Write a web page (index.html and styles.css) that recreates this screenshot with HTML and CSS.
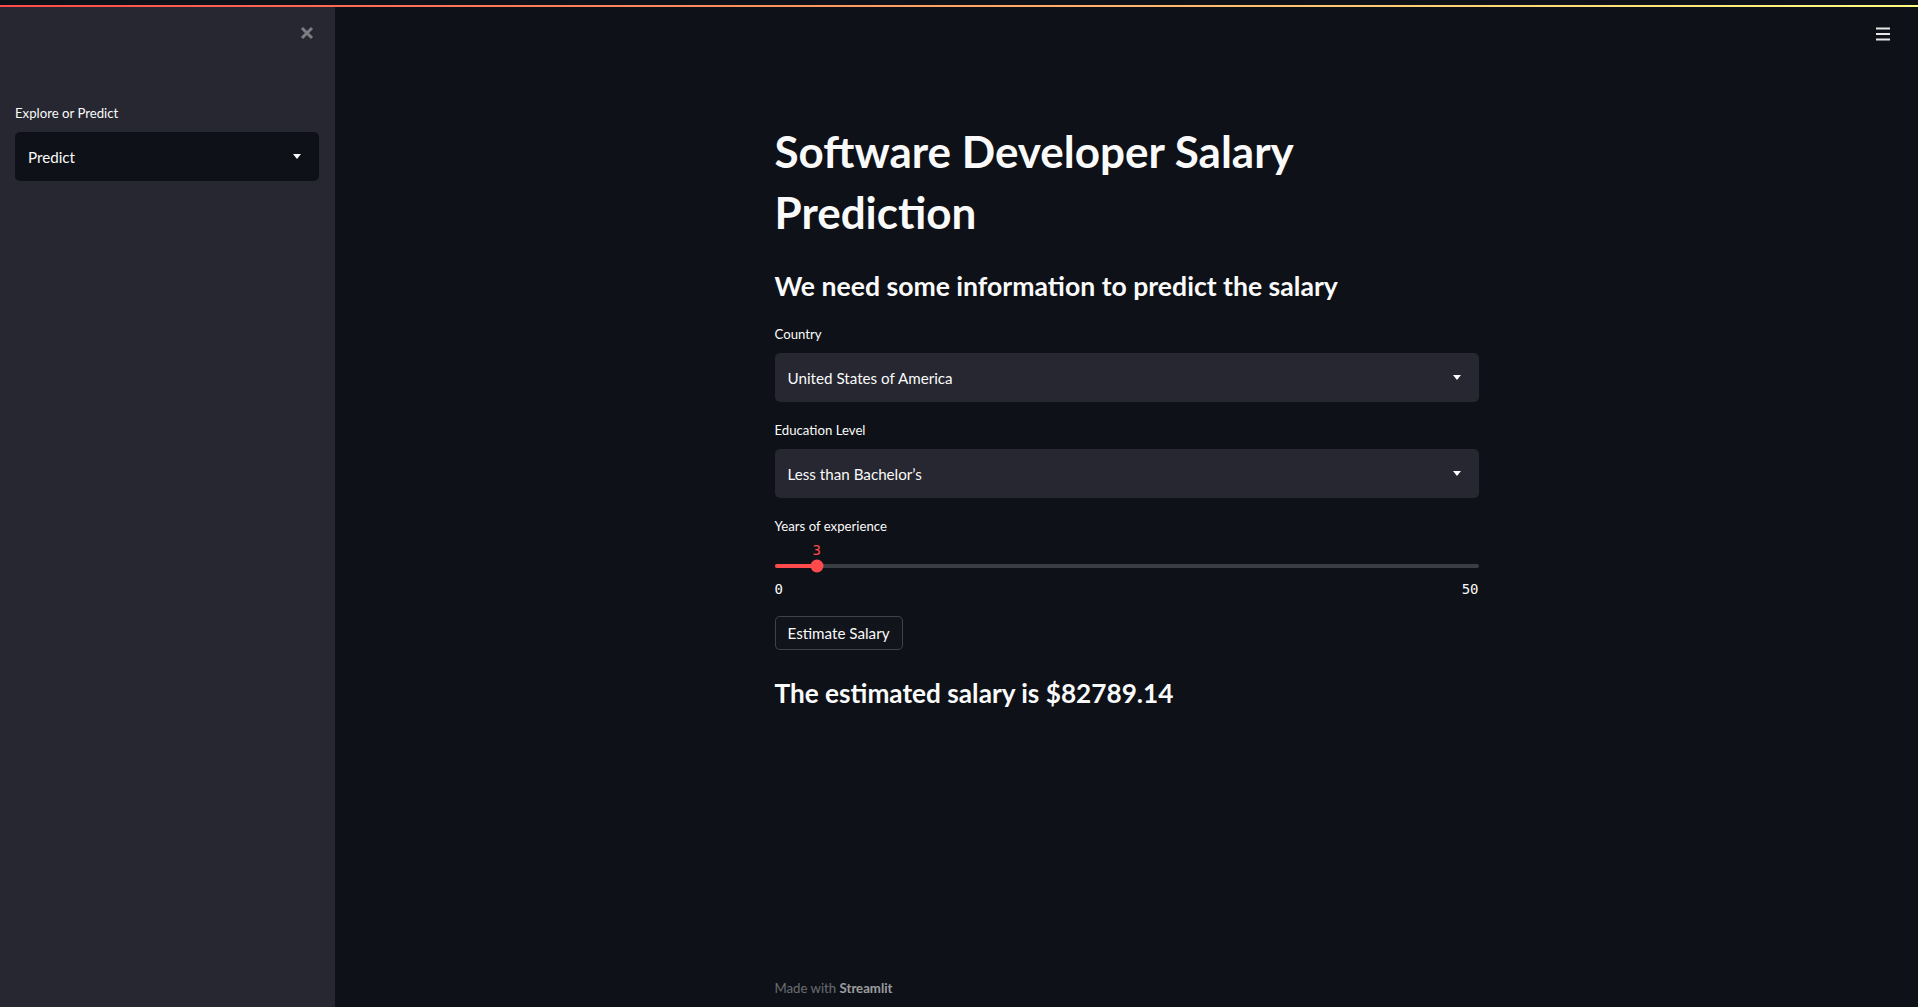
FILE: index.html
```html
<!DOCTYPE html>
<html lang="en">
<head>
<meta charset="utf-8">
<title>Salary Prediction</title>
<link rel="stylesheet" href="styles.css">
</head>
<body>
<div class="topgap"></div>
<div class="decoration"></div>
<div class="app">
  <aside class="sidebar">
    <div class="sidebar-head">
      <button class="close-btn" aria-label="Close sidebar">
        <svg viewBox="0 0 14 14" width="14" height="14"><path d="M2 2 L12 12 M12 2 L2 12" stroke="currentColor" stroke-width="3" stroke-linecap="butt"/></svg>
      </button>
    </div>
    <div class="widget side-widget">
      <label class="wlabel">Explore or Predict</label>
      <div class="select dark">
        <span class="select-value">Predict</span>
        <svg class="caret" viewBox="0 0 8 5" width="8" height="5"><path d="M0 0 H8 L4 5 Z" fill="currentColor"/></svg>
      </div>
    </div>
  </aside>
  <main class="main">
    <header class="main-head">
      <button class="menu-btn" aria-label="Menu">
        <svg viewBox="0 0 14 14" width="14" height="14"><path d="M0 1.5 H14 M0 7 H14 M0 12.5 H14" stroke="currentColor" stroke-width="2"/></svg>
      </button>
    </header>
    <div class="block">
      <h1 class="title">Software Developer Salary<br>Prediction</h1>
      <h3 class="subhead">We need some information to predict the salary</h3>

      <div class="widget w-country">
        <label class="wlabel">Country</label>
        <div class="select">
          <span class="select-value">United States of America</span>
          <svg class="caret" viewBox="0 0 8 5" width="8" height="5"><path d="M0 0 H8 L4 5 Z" fill="currentColor"/></svg>
        </div>
      </div>

      <div class="widget w-edu">
        <label class="wlabel">Education Level</label>
        <div class="select">
          <span class="select-value">Less than Bachelor’s</span>
          <svg class="caret" viewBox="0 0 8 5" width="8" height="5"><path d="M0 0 H8 L4 5 Z" fill="currentColor"/></svg>
        </div>
      </div>

      <div class="widget w-years">
        <label class="wlabel">Years of experience</label>
        <div class="slider">
          <div class="slider-value-row"><span class="slider-value" style="left:6%">3</span></div>
          <div class="track">
            <div class="fill" style="width:6%"></div>
            <div class="thumb" style="left:6%"></div>
          </div>
          <div class="ticks"><span>0</span><span>50</span></div>
        </div>
      </div>

      <button class="btn">Estimate Salary</button>

      <h3 class="result">The estimated salary is $82789.14</h3>
    </div>
    <footer class="footer">
      <span class="made">Made with <span class="brand">Streamlit</span></span>
    </footer>
  </main>
</div>
</body>
</html>
```

FILE: styles.css
```css
* {
  box-sizing: border-box;
  margin: 0;
  padding: 0;
}

html, body {
  height: 100%;
}

body {
  background: #0e1117;
  color: #fafafa;
  font-family: Lato, "Noto Sans", sans-serif;
  overflow: hidden;
  display: flex;
  flex-direction: column;
}

.topgap {
  height: 5px;
  flex: none;
}

.decoration {
  height: 2px;
  flex: none;
  background: linear-gradient(90deg, #ff4b4b, #fffd80);
}

.app {
  flex: 1;
  display: flex;
  min-height: 0;
}

/* Sidebar */
.sidebar {
  width: 335px;
  flex: none;
  background: #262730;
  padding: 19px 16px 0 15px;
}

.sidebar-head {
  display: flex;
  justify-content: flex-end;
  height: 14px;
  padding-right: 5px;
}

.close-btn,
.menu-btn {
  background: none;
  border: none;
  display: block;
  width: 14px;
  height: 14px;
  cursor: pointer;
}

.close-btn {
  color: #7c7d83;
}

.close-btn svg,
.menu-btn svg {
  display: block;
}

.side-widget {
  margin-top: 63px;
}

.wlabel {
  display: block;
  font-size: 13.2px;
  line-height: 20px;
  height: 20px;
  color: #fafafa;
}

.select {
  height: 49px;
  margin-top: 9px;
  border-radius: 5px;
  background: #262730;
  display: flex;
  align-items: center;
  justify-content: space-between;
  padding: 0 18px 0 13px;
  font-size: 15.2px;
  color: #fafafa;
}

.select.dark {
  background: #0e1117;
}

.caret {
  display: block;
  color: #fafafa;
}

/* Main */
.main {
  flex: 1;
  display: flex;
  flex-direction: column;
  min-width: 0;
}

.main-head {
  display: flex;
  justify-content: flex-end;
  padding: 20px 28px 0 0;
  height: 53px;
  flex: none;
}

.menu-btn {
  color: #e6e6e8;
}

.block {
  width: 704px;
  margin: 0 auto;
  padding-top: 61px;
}

.title {
  font-size: 44px;
  line-height: 61px;
  font-weight: 700;
}

.subhead {
  margin-top: 23px;
  font-size: 26.6px;
  line-height: 40px;
  font-weight: 700;
}

.w-country {
  margin-top: 18px;
}

.w-edu {
  margin-top: 18px;
}

.w-years {
  margin-top: 18px;
}

/* Slider */
.slider-value-row {
  position: relative;
  height: 20px;
  margin-top: 4px;
}

.slider-value {
  position: absolute;
  top: 0;
  transform: translateX(-50%);
  font-family: "DejaVu Sans Mono", "Liberation Mono", monospace;
  font-size: 14px;
  line-height: 20px;
  color: #ff4b4b;
}

.track {
  position: relative;
  height: 4px;
  margin-top: 4px;
  border-radius: 2px;
  background: #3b3d45;
}

.fill {
  height: 100%;
  border-radius: 2px;
  background: #ff4b4b;
}

.thumb {
  position: absolute;
  top: 50%;
  width: 13px;
  height: 13px;
  border-radius: 50%;
  background: #ff4b4b;
  transform: translate(-50%, -50%);
}

.ticks {
  display: flex;
  justify-content: space-between;
  margin-top: 11px;
  font-family: "DejaVu Sans Mono", "Liberation Mono", monospace;
  font-size: 14px;
  line-height: 20px;
  color: #fafafa;
}

/* Button */
.btn {
  display: block;
  margin-top: 17px;
  height: 34px;
  padding: 0 12px;
  border: 1px solid rgba(250, 250, 250, 0.2);
  border-radius: 5px;
  background: #11141b;
  color: #fafafa;
  font-family: inherit;
  font-size: 15.2px;
  line-height: 32px;
}

.result {
  margin-top: 23px;
  font-size: 26.2px;
  line-height: 40px;
  font-weight: 700;
}

/* Footer */
.footer {
  margin-top: auto;
  width: 704px;
  margin-left: auto;
  margin-right: auto;
  padding-bottom: 9px;
  font-size: 13.2px;
  line-height: 20px;
}

.made {
  color: rgba(250, 250, 250, 0.4);
}

.brand {
  color: rgba(250, 250, 250, 0.6);
  font-weight: 700;
}
```
